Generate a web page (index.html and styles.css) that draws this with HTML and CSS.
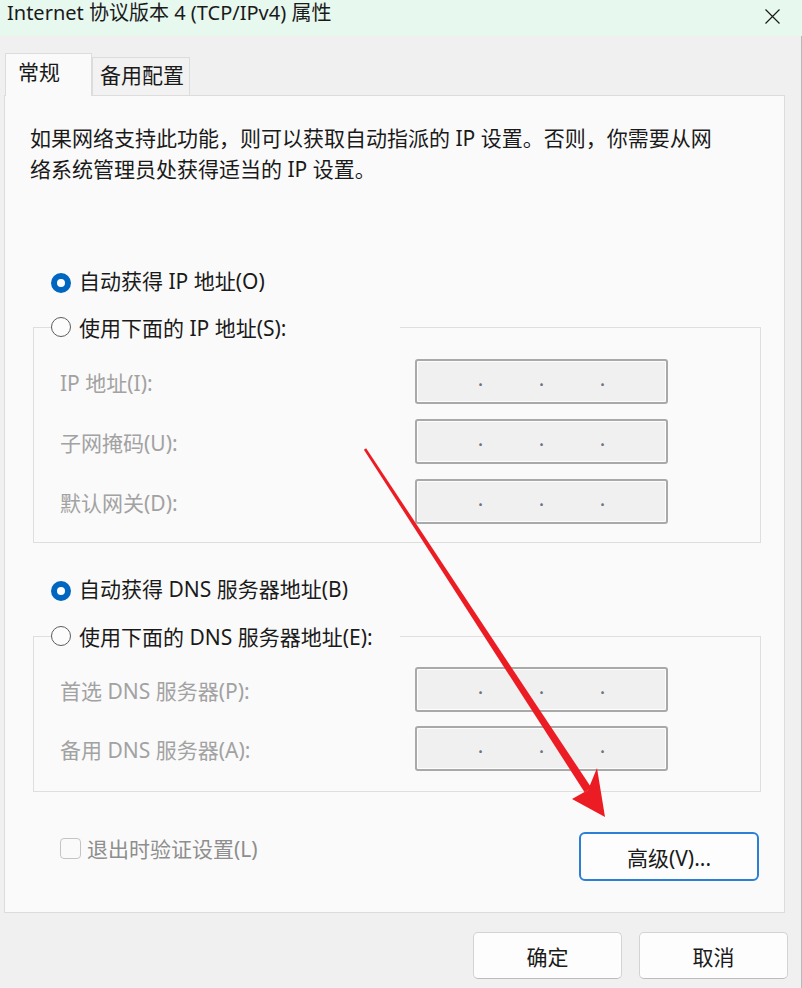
FILE: index.html
```html
<!DOCTYPE html>
<html lang="zh-CN">
<head>
    <meta charset="UTF-8">
    <meta name="viewport" content="width=device-width, initial-scale=1.0">
    <title>Internet 协议版本 4 (TCP/IPv4) 属性</title>
    <link rel="stylesheet" href="styles.css">
</head>
<body>
<div class="window">
    <div class="titlebar">
        <span class="title">Internet 协议版本 4 (TCP/IPv4) 属性</span>
        <span class="close">
            <svg width="15" height="15" viewBox="0 0 15 15"><path d="M0.5 0.5 L14.5 14.5 M14.5 0.5 L0.5 14.5" stroke="#1a1a1a" stroke-width="1.2" fill="none"/></svg>
        </span>
    </div>

    <div class="dialog">
        <div class="tabs">
            <div class="tab active">常规</div>
            <div class="tab">备用配置</div>
        </div>

        <div class="panel">
            <p class="intro">如果网络支持此功能，则可以获取自动指派的 IP 设置。否则，你需要从网<br>络系统管理员处获得适当的 IP 设置。</p>

            <div class="radio-row first"><span class="radio checked"></span>自动获得 IP 地址(O)</div>

            <fieldset class="group ip-group">
                <legend><span class="radio"></span>使用下面的 IP 地址(S):</legend>
                <div class="fields">
                    <label>IP 地址(I):</label>
                    <div class="ipbox"><span>.</span><span>.</span><span>.</span></div>
                    <label>子网掩码(U):</label>
                    <div class="ipbox"><span>.</span><span>.</span><span>.</span></div>
                    <label>默认网关(D):</label>
                    <div class="ipbox"><span>.</span><span>.</span><span>.</span></div>
                </div>
            </fieldset>

            <div class="radio-row second"><span class="radio checked"></span>自动获得 DNS 服务器地址(B)</div>

            <fieldset class="group dns-group">
                <legend><span class="radio"></span>使用下面的 DNS 服务器地址(E):</legend>
                <div class="fields">
                    <label>首选 DNS 服务器(P):</label>
                    <div class="ipbox"><span>.</span><span>.</span><span>.</span></div>
                    <label>备用 DNS 服务器(A):</label>
                    <div class="ipbox"><span>.</span><span>.</span><span>.</span></div>
                </div>
            </fieldset>

            <div class="panel-bottom">
                <div class="check-row"><span class="checkbox"></span>退出时验证设置(L)</div>
                <button class="btn advanced">高级(V)...</button>
            </div>
        </div>

        <div class="footer">
            <button class="btn">确定</button>
            <button class="btn">取消</button>
        </div>
    </div>

    <svg class="arrow" width="802" height="988" viewBox="0 0 802 988">
        <polygon points="366.1,448.3 591.4,787.8 584.6,792.2 363.9,449.7" fill="#ec1c24"/>
        <polygon points="605,817 572,799 588,790 597,768" fill="#ec1c24"/>
    </svg>
</div>
</body>
</html>
```

FILE: styles.css
```css
body { margin: 0; background-color: #f0f0f0; font-family: "Noto Sans", "Noto Sans CJK SC", sans-serif; font-size: 21px; color: #1a1a1a; }
.window { position: relative; width: 802px; height: 988px; overflow: hidden; }

.titlebar { height: 36px; background-color: #e7f8ef; display: flex; justify-content: space-between; }
.title { padding-left: 7px; font-size: 20px; line-height: 25px; }
.close { width: 15px; height: 15px; margin: 2px 22px 0 0; }

.dialog { box-sizing: border-box; width: 802px; height: 952px; padding: 17px 0 0 4px; border-right: 1px solid #b8b8b8; }

.tabs { display: flex; align-items: flex-end; height: 42px; }
.tab { box-sizing: border-box; height: 38px; width: 98px; padding: 2px 0 0 7px; line-height: 30px; border: 1px solid #dcdcdc; border-bottom: none; background-color: #f2f2f2; }
.tab.active { position: relative; z-index: 1; width: 87px; height: 43px; margin: 0 0 -1px 1px; padding: 3px 0 0 12px; background-color: #fafafa; }

.panel { box-sizing: border-box; width: 781px; height: 818px; border: 1px solid #dcdcdc; background-color: #fafafa; }
.intro { margin: 27px 0 0 25px; line-height: 31px; }

.radio-row { display: flex; align-items: center; gap: 8px; height: 30px; margin-left: 46px; line-height: 26px; }
.radio-row.first { margin-top: 81px; }
.radio-row.second { margin-top: 31px; }
.radio-row .radio { margin-top: 4px; }

.radio { box-sizing: border-box; flex: none; width: 20px; height: 20px; border-radius: 50%; border: 1.5px solid #5c5c5c; background-color: #fcfcfc; }
.radio.checked { border: 6px solid #0067c0; background-color: #fff; }

.group { box-sizing: border-box; width: 728px; margin: 16px 0 0 28px; padding: 17px 0 18px 0; border: 1px solid #dedede; min-inline-size: 0; }
.dns-group { margin-top: 17px; padding-top: 16px; padding-bottom: 20px; }
.group legend { box-sizing: border-box; display: flex; align-items: center; gap: 8px; width: 349px; height: 30px; margin-left: 17px; padding: 0; }

.fields { display: grid; grid-template-columns: 355px 253px; row-gap: 15px; align-items: center; padding-left: 26px; }
.dns-group .fields { row-gap: 14px; }
.fields label { color: #a2a2a2; }

.ipbox { box-sizing: border-box; height: 45px; display: flex; justify-content: center; border: 2px solid #a9a9a9; border-radius: 3px; background-color: #f0f0f0; box-shadow: inset 0 0 0 1px #fdfdfd; font-family: "Noto Sans CJK SC", sans-serif; font-size: 20px; line-height: 34px; color: #6f7080; }
.ipbox span { width: 61px; text-align: center; }

.panel-bottom { display: flex; justify-content: space-between; align-items: flex-start; margin: 40px 25px 0 55px; }
.check-row { display: flex; align-items: center; gap: 6px; height: 30px; margin-top: 1px; color: #8e8e8e; }
.checkbox { box-sizing: border-box; width: 21px; height: 21px; border: 1.5px solid #c4c4c4; border-radius: 4px; background-color: #fafafa; }

.btn { box-sizing: border-box; width: 149px; height: 47px; border: 1px solid #d3d3d3; border-bottom-color: #bcbcbc; border-radius: 5px; background-color: #fdfdfd; font-family: "Noto Sans", "Noto Sans CJK SC", sans-serif; font-size: 21px; color: #1a1a1a; padding: 0; }
.btn.advanced { width: 180px; height: 49px; border: 2px solid #2b7fd4; border-radius: 6px; background-color: #fdfdfd; }

.footer { display: flex; justify-content: flex-end; gap: 17px; margin: 19px 13px 0 0; }

.arrow { position: absolute; top: 0; left: 0; pointer-events: none; }
```
